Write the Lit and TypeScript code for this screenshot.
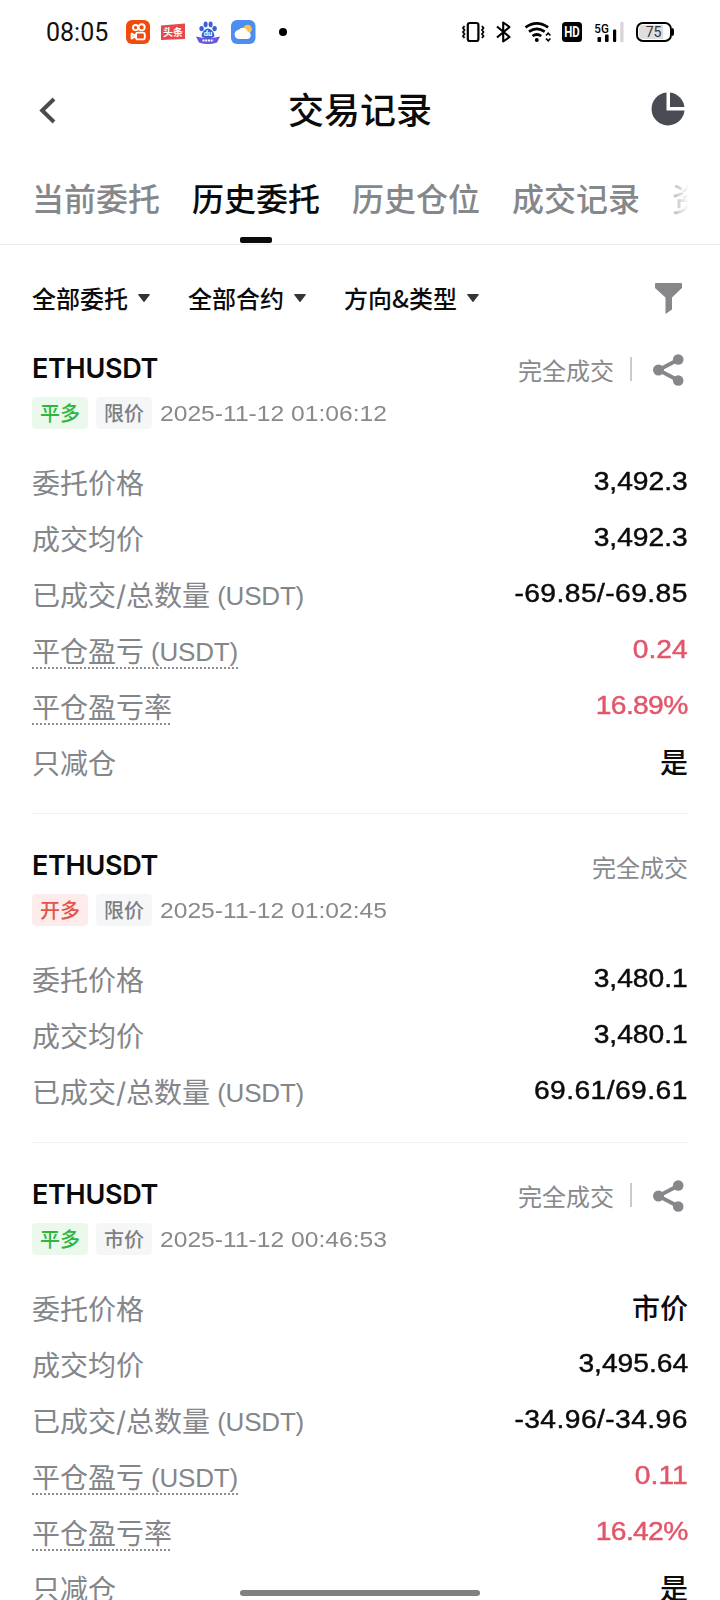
import { LitElement, html, css, svg, nothing } from "lit";
import { customElement, property } from "lit/decorators.js";
import { classMap } from "lit/directives/class-map.js";

interface Field {
  label: string;
  unit?: string;
  value: string;
  hint?: boolean;
  tone?: "red";
  cjk?: boolean;
}

interface Order {
  symbol: string;
  side: string;
  opening?: boolean;
  kind: string;
  time: string;
  share: boolean;
  fields: Field[];
}

const orders: Order[] = [
  {
    symbol: "ETHUSDT",
    side: "平多",
    kind: "限价",
    time: "2025-11-12 01:06:12",
    share: true,
    fields: [
      { label: "委托价格", value: "3,492.3" },
      { label: "成交均价", value: "3,492.3" },
      { label: "已成交/总数量", unit: "(USDT)", value: "-69.85/-69.85" },
      { label: "平仓盈亏", unit: "(USDT)", value: "0.24", hint: true, tone: "red" },
      { label: "平仓盈亏率", value: "16.89%", hint: true, tone: "red" },
      { label: "只减仓", value: "是", cjk: true },
    ],
  },
  {
    symbol: "ETHUSDT",
    side: "开多",
    opening: true,
    kind: "限价",
    time: "2025-11-12 01:02:45",
    share: false,
    fields: [
      { label: "委托价格", value: "3,480.1" },
      { label: "成交均价", value: "3,480.1" },
      { label: "已成交/总数量", unit: "(USDT)", value: "69.61/69.61" },
    ],
  },
  {
    symbol: "ETHUSDT",
    side: "平多",
    kind: "市价",
    time: "2025-11-12 00:46:53",
    share: true,
    fields: [
      { label: "委托价格", value: "市价", cjk: true },
      { label: "成交均价", value: "3,495.64" },
      { label: "已成交/总数量", unit: "(USDT)", value: "-34.96/-34.96" },
      { label: "平仓盈亏", unit: "(USDT)", value: "0.11", hint: true, tone: "red" },
      { label: "平仓盈亏率", value: "16.42%", hint: true, tone: "red" },
      { label: "只减仓", value: "是", cjk: true },
    ],
  },
];

@customElement("status-bar")
class StatusBar extends LitElement {
  static styles = css`
    :host {
      display: flex;
      align-items: center;
      justify-content: space-between;
      height: 64px;
      padding: 0 46px 0 46px;
      box-sizing: border-box;
    }
    .side {
      display: flex;
      align-items: center;
    }
    .time {
      font: 400 25px/30px Roboto, sans-serif;
      color: #111;
      width: 80px;
      white-space: nowrap;
      padding-top: 1px;
    }
    .apps {
      display: flex;
      gap: 11px;
    }
    .dot {
      width: 8px;
      height: 8px;
      border-radius: 50%;
      background: #000;
      margin-left: 23px;
    }
    .tiny {
      font-family: "Noto Sans CJK SC", sans-serif;
      font-weight: 700;
    }
    .latin {
      font-family: Roboto, sans-serif;
      font-weight: 700;
    }
    svg {
      display: block;
    }
  `;

  render() {
    return html`
      <div class="side">
        <div class="time">08:05</div>
        <div class="apps">
          <svg width="24" height="24" viewBox="0 0 24 24">
            <rect width="24" height="24" rx="6" fill="#f04a0c" />
            <g fill="none" stroke="#fff" stroke-width="1.9">
              <circle cx="9.6" cy="7.6" r="2.6" />
              <circle cx="15.6" cy="7.3" r="3.1" />
              <rect x="10" y="12.6" width="8.8" height="6.8" rx="2" />
              <path d="M9.8 15.9 5.6 13.6v5z" stroke-linejoin="round" />
            </g>
          </svg>
          <svg width="24" height="24" viewBox="0 0 24 24">
            <path d="M0 5.6 24 3.6V19l-24 1z" fill="#e5484d" />
            <text class="tiny" x="12" y="15.8" font-size="10" text-anchor="middle" fill="#fff">头条</text>
          </svg>
          <svg width="24" height="24" viewBox="0 0 24 24">
            <g fill="#3a5fd0">
              <ellipse cx="5.6" cy="8.6" rx="2.2" ry="2.7" />
              <ellipse cx="9.6" cy="4.4" rx="2" ry="2.8" />
              <ellipse cx="14.6" cy="4.4" rx="2" ry="2.8" />
              <ellipse cx="18.6" cy="8.6" rx="2.2" ry="2.7" />
              <path d="M12 8.4c3 0 6.4 4 6.4 7 0 2-2 2.6-6.4 2.6s-6.4-.6-6.4-2.6c0-3 3.4-7 6.4-7z" />
            </g>
            <text class="latin" x="12" y="15.8" font-size="7.5" text-anchor="middle" fill="#fff">du</text>
            <path d="M0 16.5q12 3 24 0L21 22.5q-9 3-18 0z" fill="#6656d8" />
            <path d="M6.5 20.5h11" stroke="#fff" stroke-width="2" stroke-dasharray="2 .7" />
          </svg>
          <svg width="25" height="24" viewBox="0 0 25 24">
            <rect width="24.5" height="24" rx="6" fill="#4b8df0" />
            <circle cx="16.6" cy="9" r="4.3" fill="#f8c34a" />
            <path d="M8.500 19a4.600 4.600 0 0 1-.7-9.200 5 5 0 0 1 8.900 1.800A3.800 3.800 0 0 1 16.800 19z" fill="#fffdf6" />
          </svg>
        </div>
        <div class="dot"></div>
      </div>
      <svg width="212" height="24" viewBox="462 20 212 24">
        <g fill="none" stroke="#000">
          <rect x="467.8" y="23" width="10.6" height="18" rx="2" stroke-width="2.2" />
          <path d="M464.500 26l-1.500 2 1.500 2-1.500 2 1.500 2-1.500 2 1.500 2M482 26l1.500 2-1.500 2 1.500 2-1.500 2 1.500 2-1.500 2" stroke-width="1.8" />
          <path d="M497 26.500l12.500 10.500-6.300 4.500V22.500l6.300 4.500L497 37.500" stroke-width="2.1" stroke-linejoin="round" />
          <path d="M525.500 27.300q11.200-8 22.600 0M529 31.700q7.800-5.600 15.700 0M532.500 36q4.300-3 8.700 0" stroke-width="2.7" />
          <path d="M546 35.500l2.200-2.400 2.200 2.400M546 38.500l2.200 2.400 2.200-2.400" stroke-width="1.6" />
        </g>
        <circle cx="536.8" cy="40" r="2" />
        <rect x="562" y="22" width="20" height="20" rx="3.5" />
        <text class="latin" x="572" y="37.3" font-size="14.5" textLength="15.5" lengthAdjust="spacingAndGlyphs" text-anchor="middle" fill="#fff">HD</text>
        <text x="594.3" y="32.5" font-family="Roboto" font-weight="500" font-size="13" textLength="14.5" lengthAdjust="spacingAndGlyphs">5G</text>
        <rect x="597.5" y="37" width="3.6" height="5" rx="1" />
        <rect x="605" y="34.5" width="3.6" height="7.5" rx="1" />
        <rect x="613" y="29.5" width="3.2" height="12.5" rx="1" />
        <rect x="620.3" y="22" width="3.2" height="20" fill="#d6d6d6" />
        <rect x="637" y="23" width="34" height="18" rx="6" fill="#fff" stroke="#000" stroke-width="2" />
        <path d="M643 25h20v14h-20q-4 0-4-4v-6q0-4 4-4z" fill="#dedede" />
        <text x="653.5" y="37" font-family="Roboto" font-size="14" text-anchor="middle" fill="#333">75</text>
        <path d="M672 28q2 0 2 2v4q0 2-2 2z" />
      </svg>
    `;
  }
}

@customElement("order-record")
class OrderRecord extends LitElement {
  @property({ attribute: false }) order!: Order;

  static styles = css`
    :host {
      display: block;
      box-sizing: border-box;
      padding: 31px 0 23px;
      border-bottom: 1px solid #f0f1f2;
      font-family: Inter, "Noto Sans CJK SC", sans-serif;
    }
    .head {
      display: flex;
      height: 40px;
      align-items: center;
      justify-content: space-between;
    }
    .symbol {
      font: 600 27px/40px Inter, sans-serif;
      letter-spacing: -0.3px;
      color: #0b0b0c;
      padding-top: 2px;
    }
    .state {
      display: flex;
      align-items: center;
      font: 400 24px/36px "Noto Sans CJK SC", sans-serif;
      color: #88898c;
      padding-top: 3px;
    }
    .bar {
      width: 2px;
      height: 24px;
      background: #c9cacc;
      margin: 0 21px 2px 16px;
    }
    .share {
      display: block;
      margin: 0 4px 0 0;
    }
    .meta {
      display: flex;
      align-items: center;
      gap: 8px;
      height: 32px;
      margin: 9px 0 25px;
    }
    .tag {
      width: 56px;
      height: 32px;
      border-radius: 4px;
      background: #f4f6f8;
      color: #7d7f83;
      font: 500 20px/31px "Noto Sans CJK SC", sans-serif;
      text-align: center;
    }
    .tag.close {
      background: #eaf9ec;
      color: #2db53c;
    }
    .tag.open {
      background: #fdeceb;
      color: #e2554d;
    }
    .when {
      font: 400 22px/33px "Liberation Sans", sans-serif;
      color: #88898c;
      white-space: pre;
      transform: scaleX(1.12);
      transform-origin: left center;
    }
    .row {
      display: flex;
      height: 56px;
      align-items: center;
      justify-content: space-between;
    }
    .label {
      font: 400 28px/42px Inter, "Noto Sans CJK SC", sans-serif;
      height: 38px;
      color: #848689;
      white-space: pre;
    }
    .unit {
      font-family: "Liberation Sans", sans-serif;
      font-size: 26px;
      line-height: 0;
      letter-spacing: -0.2px;
      vertical-align: 1.5px;
    }
    .hint {
      background: repeating-linear-gradient(90deg, #8d8f92 0 2px, transparent 2px 4px) left bottom / 100% 2px no-repeat;
    }
    .value {
      font: 400 26px/36px "Liberation Sans", sans-serif;
      padding-bottom: 2px;
      color: #0b0b0c;
      -webkit-text-stroke: 0.45px currentColor;
      transform: scaleX(1.085);
      transform-origin: right center;
    }
    .value.pair {
      letter-spacing: 0.4px;
    }
    .value.percent {
      letter-spacing: -0.6px;
    }
    .value.cjk {
      font: 500 28px/36px "Noto Sans CJK SC", sans-serif;
      -webkit-text-stroke: 0;
      transform: none;
    }
    .value.red {
      color: #e2566a;
    }
  `;

  render() {
    const o = this.order;
    return html`
      <div class="head">
        <span class="symbol">${o.symbol}</span>
        <div class="state">
          <span>完全成交</span>
          ${o.share
            ? html`<span class="bar"></span>
                <svg class="share" width="31" height="32" viewBox="0 0 31 32" fill="#85878a">
                  <path d="M25.5 5.5 5.5 16l20 10.5" fill="none" stroke="#85878a" stroke-width="3.8" />
                  <circle cx="25.2" cy="5.5" r="5.3" />
                  <circle cx="5.5" cy="16" r="5.5" />
                  <circle cx="25.2" cy="26.5" r="5.3" />
                </svg>`
            : nothing}
        </div>
      </div>
      <div class="meta">
        <span class=${classMap({ tag: true, open: !!o.opening, close: !o.opening })}>${o.side}</span>
        <span class="tag">${o.kind}</span>
        <span class="when">${o.time}</span>
      </div>
      ${o.fields.map(
        (f) => html`<div class="row">
          <span class=${classMap({ label: true, hint: !!f.hint })}>${f.label}${f.unit ? html`<span class="unit"> ${f.unit}</span>` : nothing}</span>
          <span
            class=${classMap({
              value: true,
              red: f.tone === "red",
              cjk: !!f.cjk,
              pair: f.value.includes("/"),
              percent: f.value.endsWith("%"),
            })}
            >${f.value}</span
          >
        </div>`
      )}
    `;
  }
}

@customElement("app-root")
class AppRoot extends LitElement {
  static styles = css`
    :host {
      display: block;
      position: relative;
      width: 720px;
      height: 1600px;
      overflow: hidden;
      background: #fff;
      font-family: "Noto Sans CJK SC", sans-serif;
    }
    .bar {
      display: grid;
      grid-template-columns: 1fr auto 1fr;
      align-items: center;
      height: 92px;
      padding: 0 35px 0 38px;
      box-sizing: border-box;
    }
    .title {
      font-size: 36px;
      line-height: 52px;
      font-weight: 500;
      color: #0b0b0c;
      padding-bottom: 4px;
      margin-left: -3px;
    }
    .pie {
      justify-self: end;
      margin-bottom: 2px;
    }
    .tabs {
      display: flex;
      gap: 32px;
      height: 88px;
      padding-left: 32px;
      border-bottom: 1px solid #ebeced;
      overflow: hidden;
    }
    .tab {
      flex: none;
      display: flex;
      flex-direction: column;
      align-items: center;
      justify-content: space-between;
      font-size: 32px;
      line-height: 46px;
      font-weight: 500;
      color: #85878a;
      padding: 18px 0 1px;
      box-sizing: border-box;
      height: 88px;
    }
    .tab.active {
      color: #0b0b0c;
    }
    .tab.active::after {
      content: "";
      width: 32px;
      height: 6px;
      border-radius: 2px;
      background: #0b0b0c;
    }
    .tab.fade {
      background: linear-gradient(90deg, #b4b5b7 0, #fff 17px);
      -webkit-background-clip: text;
      background-clip: text;
      color: transparent;
    }
    .filters {
      display: flex;
      align-items: center;
      height: 72px;
      padding: 34px 38px 0 32px;
      box-sizing: border-box;
      gap: 38px;
      font-size: 24px;
      line-height: 36px;
      font-weight: 500;
      color: #0b0b0c;
    }
    .filter {
      display: flex;
      align-items: center;
      gap: 10px;
      height: 36px;
    }
    .funnel {
      margin-left: auto;
    }
    .list {
      padding: 0 32px;
    }
    .home {
      position: absolute;
      left: 240px;
      bottom: 4px;
      width: 240px;
      height: 6px;
      border-radius: 3px;
      background: #808080;
    }
    svg {
      display: block;
    }
  `;

  render() {
    const arrow = svg`<svg width="12" height="8" viewBox="0 0 12 8"><path d="M.8.6h10.400L6 7.400z" fill="#333538" stroke="#333538" stroke-width="1.200" stroke-linejoin="round" /></svg>`;
    return html`
      <status-bar></status-bar>
      <header class="bar">
        <svg width="18" height="28" viewBox="0 0 18 28">
          <path d="M16 3 4.2 14.500l11.800 11.500" fill="none" stroke="#4a4c50" stroke-width="4" />
        </svg>
        <div class="title">交易记录</div>
        <svg class="pie" width="34" height="34" viewBox="0 0 34 34" fill="#484b53">
          <path d="M15.500.5v18h18A16.500 16.500 0 1 1 15.500.5z" />
          <path d="M19 .5A16.500 16.500 0 0 1 33.400 15H19z" />
        </svg>
      </header>
      <nav class="tabs">
        <span class="tab">当前委托</span>
        <span class="tab active">历史委托</span>
        <span class="tab">历史仓位</span>
        <span class="tab">成交记录</span>
        <span class="tab fade">资</span>
      </nav>
      <div class="filters">
        <div class="filter">全部委托 ${arrow}</div>
        <div class="filter">全部合约 ${arrow}</div>
        <div class="filter">方向&amp;类型 ${arrow}</div>
        <svg class="funnel" width="27" height="31" viewBox="0 0 27 31">
          <path d="M1 0h25q1 0 1 1v4L17 14.500V26.500L10.500 31V14.500L0 5V1q0-1 1-1z" fill="#85878a" />
        </svg>
      </div>
      <main class="list">${orders.map((o) => html`<order-record .order=${o}></order-record>`)}</main>
      <div class="home"></div>
    `;
  }
}
